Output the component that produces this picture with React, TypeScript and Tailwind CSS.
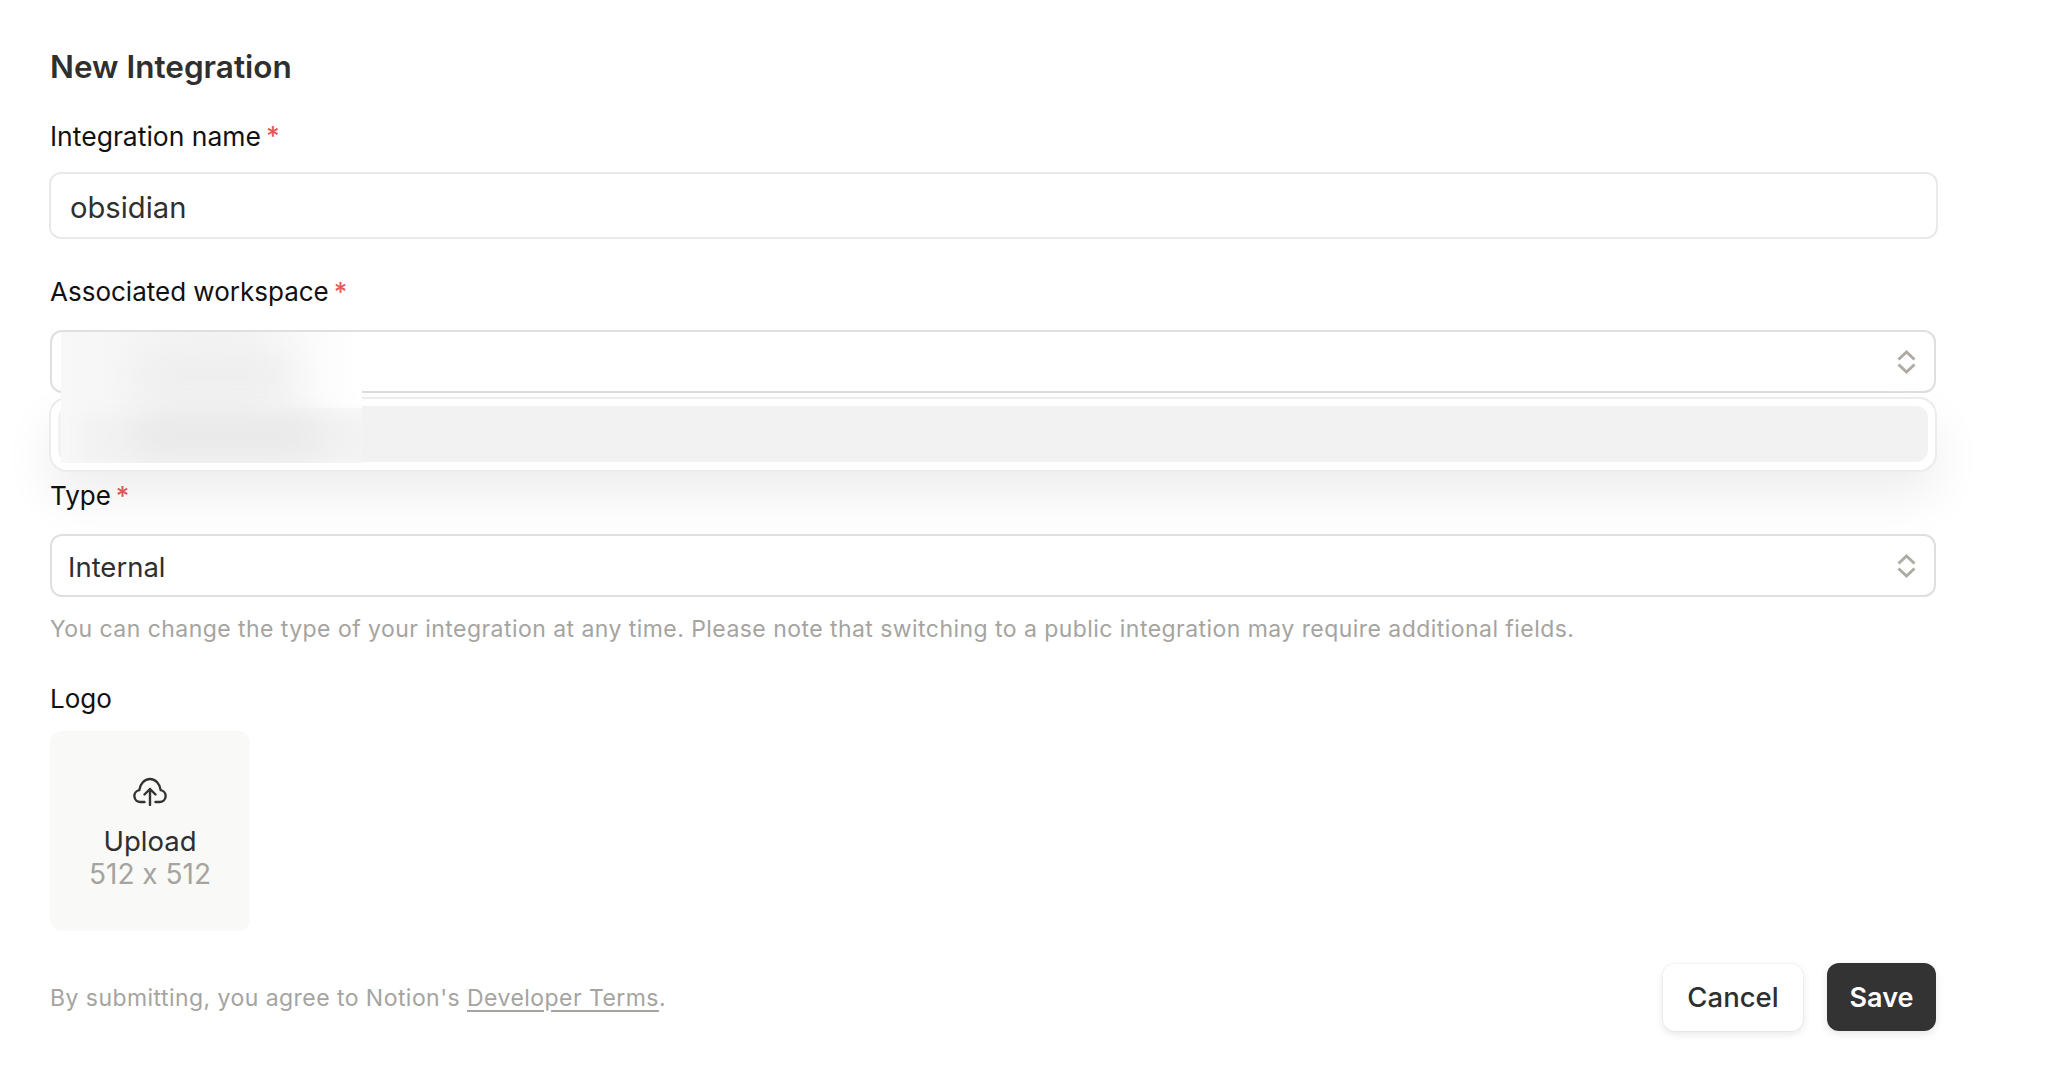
import "react"

function Required() {
  return <span className="ml-[5px] font-medium text-[#eb5757]">*</span>
}

function Chevrons() {
  return (
    <svg width="19" height="26" viewBox="0 0 19 26" fill="none" stroke="#aeaba3" strokeWidth="3" className="shrink-0">
      <path d="M1.5 10.5 9.5 3 17.5 10.5" />
      <path d="M1.5 15.5 9.5 23 17.5 15.5" />
    </svg>
  )
}

function CloudIcon() {
  return (
    <svg width="34" height="29" viewBox="0 0 34 29" fill="none" stroke="#333333" strokeWidth="2.4" strokeLinecap="round" strokeLinejoin="round">
      <path d="M11.5 25H7.5a6 6 0 0 1-1.2-11.9C7 7 11.5 2 17 2s10 5 10.7 11.1a6 6 0 0 1-1.2 11.9H22.5" />
      <path d="M17 28V12M11.5 17.5 17 12l5.5 5.5" />
    </svg>
  )
}

export default function App() {
  return (
    <div className="h-[1066px] w-full overflow-hidden bg-white pl-[50px] pr-[119px] pt-[47px] font-['Inter','Liberation_Sans',sans-serif] text-[#111111] [font-feature-settings:'calt'_0]">
      <h1 className="h-[40px] text-[31.5px] leading-[40px] font-semibold text-[#2f2f2f]">New Integration</h1>

      <label className="mt-[34px] block h-[30px] text-[26.5px] leading-[30px]">
        Integration name
        <Required />
      </label>
      <div className="-mx-px mt-[21px] flex h-[67px] items-center rounded-[12px] border-2 border-[#e9e9e9] bg-white pl-[19px] pt-[4px] text-[29.2px] text-[#2f2f2f]">
        obsidian
      </div>

      <label className="mt-[38px] block h-[30px] text-[26px] leading-[30px]">
        Associated workspace
        <Required />
      </label>
      <div className="relative mt-[23px] mr-px">
        <div className="flex h-[63px] items-center justify-end rounded-[12px] border-2 border-[#dfdfdf] bg-white pr-[18px]">
          <Chevrons />
        </div>

        <div className="absolute top-[67px] -left-px -right-px z-10 h-[75px] rounded-[18px] border-2 border-[#ececec] bg-white p-[7px] shadow-[0_24px_50px_rgba(0,0,0,0.07)]">
          <div className="h-[56px] rounded-[12px] bg-[#f2f2f2]" />
        </div>

        {/* redacted workspace name */}
        <div className="absolute top-[2px] left-[11px] z-20 h-[131px] w-[301px] overflow-hidden bg-gradient-to-r from-[#f8f8f8] via-[#f3f3f3] to-[#f8f8f8]">
          <div className="absolute top-0 right-0 h-[76px] w-[110px] bg-gradient-to-r from-transparent to-white" />
          <div className="absolute top-[84px] left-[20px] h-[47px] w-[291px] bg-[#f2f2f2] blur-[8px]" />
          <div className="absolute top-[24px] left-[75px] h-[36px] w-[160px] rounded-full bg-[#eeeeee] blur-[16px]" />
          <div className="absolute top-[84px] left-[70px] h-[38px] w-[190px] rounded-full bg-[#e8e8e8] blur-[16px]" />
        </div>
      </div>

      <label className="mt-[88px] block h-[30px] text-[26px] leading-[30px]">
        Type
        <Required />
      </label>
      <div className="mt-[23px] mr-px flex h-[63px] items-center justify-between rounded-[12px] border-2 border-[#dfdfdf] bg-white pl-[16px] pr-[18px] text-[27.5px] text-[#2f2f2f]">
        <span className="pt-[5px]">Internal</span>
        <Chevrons />
      </div>
      <p className="mt-[17px] h-[30px] text-[23px] leading-[30px] tracking-[0.0195em] text-[#a5a4a0]">
        You can change the type of your integration at any time. Please note that switching to a public integration may require additional fields.
      </p>

      <label className="mt-[40px] block h-[30px] text-[26px] leading-[30px]">Logo</label>
      <div className="mt-[17px] flex h-[200px] w-[200px] flex-col items-center rounded-[12px] bg-[#f9f9f7] pt-[46px]">
        <CloudIcon />
        <span className="mt-[19px] text-[27.5px] leading-[33px] text-[#2f2f2f]">Upload</span>
        <span className="text-[28px] leading-[33px] text-[#a5a4a0]">512 x 512</span>
      </div>

      <div className="mt-[32px] mr-px flex h-[68px] items-center justify-between">
        <p className="pt-[2px] text-[23px] tracking-[0.0195em] text-[#a5a4a0]">
          By submitting, you agree to Notion's <span className="underline underline-offset-4">Developer Terms</span>.
        </p>
        <div className="flex items-end gap-[24px]">
          <button className="h-[67px] w-[140px] rounded-[12px] bg-white text-[27.5px] font-medium text-[#2f2f2f] shadow-[0_0_0_1px_rgba(0,0,0,0.03),0_3px_8px_rgba(0,0,0,0.1)]">
            Cancel
          </button>
          <button className="h-[68px] w-[109px] rounded-[12px] bg-[#333333] pt-[3px] text-[27px] font-semibold text-white shadow-[0_3px_8px_rgba(0,0,0,0.1)]">
            Save
          </button>
        </div>
      </div>
    </div>
  )
}
